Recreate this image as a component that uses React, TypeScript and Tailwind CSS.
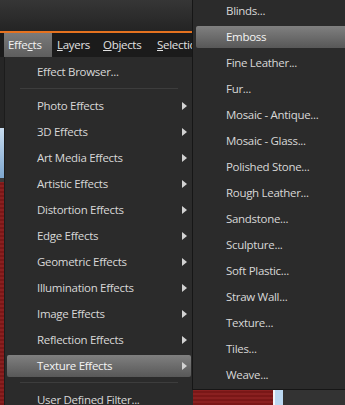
import React from "react";

type Item = { label: string; arrow?: boolean; active?: boolean } | "sep";

const effects: Item[] = [
  { label: "Effect Browser..." },
  "sep",
  { label: "Photo Effects", arrow: true },
  { label: "3D Effects", arrow: true },
  { label: "Art Media Effects", arrow: true },
  { label: "Artistic Effects", arrow: true },
  { label: "Distortion Effects", arrow: true },
  { label: "Edge Effects", arrow: true },
  { label: "Geometric Effects", arrow: true },
  { label: "Illumination Effects", arrow: true },
  { label: "Image Effects", arrow: true },
  { label: "Reflection Effects", arrow: true },
  { label: "Texture Effects", arrow: true, active: true },
  "sep",
  { label: "User Defined Filter..." },
];

const textures = [
  "Blinds...",
  "Emboss",
  "Fine Leather...",
  "Fur...",
  "Mosaic - Antique...",
  "Mosaic - Glass...",
  "Polished Stone...",
  "Rough Leather...",
  "Sandstone...",
  "Sculpture...",
  "Soft Plastic...",
  "Straw Wall...",
  "Texture...",
  "Tiles...",
  "Weave...",
];

const Arrow = () => (
  <svg width="5" height="8" viewBox="0 0 5 8" className="shrink-0">
    <polygon points="0,0 5,4 0,8" fill="#d2d2d2" />
  </svg>
);

const highlight =
  "bg-gradient-to-b from-[#808080] to-[#585858] rounded-[2px] text-[#f4f4f4]";

export default function App() {
  return (
    <div className="relative h-[405px] w-[345px] overflow-hidden bg-[#262626] font-['Open_Sans','Noto_Sans',sans-serif] text-[11.5px] tracking-[-0.3px] text-[#d8d8d8]">
      {/* toolbar strip */}
      <div className="h-[31px] bg-gradient-to-b from-[#363636] to-[#242424]" />
      <div className="h-[2px] bg-[#e5721f]" />

      {/* menu bar */}
      <nav className="flex h-[24px] items-stretch bg-[#1b1b1b] pl-[4px] text-[#e2e2e2]">
        <div className="flex w-[48px] items-center bg-gradient-to-b from-[#7a7a7a] to-[#5e5e5e] pl-[4px] text-[#f2f2f2]">
          Effe<span className="underline">c</span>ts
        </div>
        <div className="flex w-[46px] items-center pl-[5px]">
          <span className="underline">L</span>ayers
        </div>
        <div className="flex w-[54px] items-center pl-[5px]">
          <span className="underline">O</span>bjects
        </div>
        <div className="flex items-center pl-[5px]">
          <span className="underline">S</span>election
        </div>
      </nav>

      {/* workspace behind the menus */}
      <div className="flex h-[348px]">
        <div className="flex w-[273px] flex-col">
          <div className="h-[71px] bg-[#262626]" />
          <div className="h-[50px] bg-gradient-to-b from-[#c8dcef] to-[#7ea7cf]" />
          <div className="h-[4px] bg-[#3a3a3a]" />
          <div className="flex-1 bg-[repeating-linear-gradient(0deg,#7a1717_0px,#7a1717_2px,#8a2020_2px,#8a2020_4px)]" />
        </div>
        <div className="w-[2px] bg-[#f2f6fa]" />
        <div className="w-[8px] bg-[#bcd9f2]" />
        <div className="flex-1 border-t border-[#1a1a1a] bg-[#333333]" />
      </div>

      {/* Effects dropdown */}
      <div className="absolute left-[4px] top-[57px] w-[189px] border-l border-[#1c1c1c] bg-[#2b2b2b] pt-[1px]">
        {effects.map((item, i) =>
          item === "sep" ? (
            <div key={i} className="flex h-[8px] items-center px-[15px]">
              <div className="h-px w-full bg-[#3d3d3d]" />
            </div>
          ) : (
            <div key={i} className="h-[26px] px-[2px] pt-[3px]">
              <div
                className={`flex h-[22px] items-center justify-between pl-[30px] pr-[4px] ${
                  item.active ? highlight : ""
                }`}
              >
                <span className="whitespace-nowrap">{item.label}</span>
                {item.arrow && <Arrow />}
              </div>
            </div>
          )
        )}
      </div>

      {/* Texture Effects submenu */}
      <div className="absolute left-[192px] top-[-3px] w-[170px] border-b border-l border-[#161616] bg-[#2b2b2b] pb-[1px] pt-[1px]">
        {textures.map((label) => (
          <div key={label} className="h-[26px] pl-[3px] pt-[2px]">
            <div
              className={`flex h-[22px] items-center pl-[30px] ${
                label === "Emboss" ? highlight + " rounded-r-none" : ""
              }`}
            >
              <span className="whitespace-nowrap">{label}</span>
            </div>
          </div>
        ))}
      </div>
    </div>
  );
}
